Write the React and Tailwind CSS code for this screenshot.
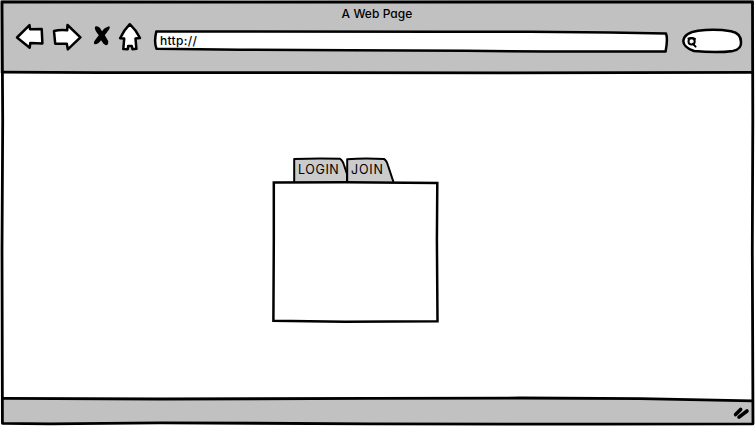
import React from "react";

const stroke = {
  fill: "none",
  stroke: "#000",
  strokeWidth: 2.5,
  strokeLinejoin: "round",
  strokeLinecap: "round",
};

function ArrowLeft() {
  return (
    <svg className="block h-[28px] w-[30px]" viewBox="15 23 30 28">
      <path {...stroke} fill="#fff" d="M17 37.5 L29.5 25.2 L30 29.2 L41.7 29 L42.4 43.4 L30.3 43 L29.7 47.7 Z" />
    </svg>
  );
}

function ArrowRight() {
  return (
    <svg className="block h-[28px] w-[30px]" viewBox="52 23 30 28">
      <path {...stroke} fill="#fff" d="M54 31 Q60 29.5 67.2 30.3 L67.5 25 L80.4 37.3 L67.8 49.3 L66.8 43.8 L55.2 43.7 Z" />
    </svg>
  );
}

function Stop() {
  return (
    <svg className="block h-[22px] w-[18px]" viewBox="93 25 18 22">
      <path d="M95.2 26.4 Q98 25.5 100 28 L102 31.2 Q104 27.8 109 26.2 Q110.6 27 109 29.4 L104.8 35.3 L108.2 41 Q108.7 45 106 45.3 Q103.5 44.5 101 40.2 Q98 44.7 94.5 44.3 Q93 42.5 95.2 40 L98.8 35.3 Q93.6 29 95.2 26.4 Z" fill="#000" />
    </svg>
  );
}

function Home() {
  return (
    <svg className="block h-[30px] w-[24px]" viewBox="118 22 24 30">
      <path {...stroke} fill="#fff" d="M129.8 24.2 Q124 30 120.1 38.2 L124.2 38.6 L123.3 49 L127.8 49.2 L128.2 46 L131.8 46 L132.5 49.2 L136.4 48.8 L135.5 38.6 L140 38 Q136 30 129.8 24.2 Z" />
    </svg>
  );
}

function AddressBar() {
  return (
    <div className="relative h-[24px] w-[516px] pl-[7px]">
      <svg className="absolute inset-0 h-full w-full" viewBox="153 29 516 24">
        <path {...stroke} fill="#fff" d="M156.3 31.5 L440 31.7 L530 31.8 L610 32.6 L666 33.5 Q668 39 665.6 51.4 L545 51.5 L465 50.8 L350 50.2 L240 49.7 L156.5 48.8 Q153.8 42 156.3 31.5 Z" />
      </svg>
      <span className="relative block text-[12px] font-medium leading-[23px] tracking-[0.32px]">http://</span>
    </div>
  );
}

function SearchBox() {
  return (
    <svg className="block h-[28px] w-[64px]" viewBox="680 27 64 28">
      <path {...stroke} fill="#fff" d="M698 30.7 Q715 28.7 731 31.2 Q741 33 741 42 Q741.8 49 733 50.9 Q718 53.2 694 51 Q683.5 47.5 683.3 41 Q684 32.8 698 30.7 Z" />
      <circle {...stroke} strokeWidth="2" cx="691.6" cy="41.4" r="3.1" />
      <path {...stroke} strokeWidth="2" d="M688.4 38.4 Q692 37.2 695 38.8 M692.8 43.8 L695.6 46.6" />
    </svg>
  );
}

function Tab({ label, wide }) {
  return (
    <button className={`relative block h-[26px] pl-[5px] text-left text-[12.5px] leading-[26px] ${wide ? "w-[53px] tracking-[0.6px]" : "w-[49px] tracking-[0.8px]"}`}>
      <svg className="absolute inset-0 h-full w-full overflow-visible" viewBox={wide ? "0 0 53 26" : "0 0 49 26"}>
        {wide ? (
          <path {...stroke} strokeWidth="2" fill="#cbcbcb" d="M1.2 25 L1.2 2 Q25 1 47 1.8 Q49.5 3 51 8 L54 17 L54 25" />
        ) : (
          <path {...stroke} strokeWidth="2" fill="#cbcbcb" d="M1.2 25 L1.2 2.2 Q18 1 38 2 Q40.4 3 42 8.5 L47.3 24.5" />
        )}
      </svg>
      <span className="relative">{label}</span>
    </button>
  );
}

export default function App() {
  return (
    <div className="relative flex h-[426px] w-[755px] flex-col overflow-hidden bg-white font-['Inter',sans-serif] text-black [font-feature-settings:'cv11'_1]">
      <header className="h-[73px] bg-[#c1c1c1]">
        <h1 className="flex h-[22px] justify-center pr-[1px] pt-[5px] text-[12px] font-medium leading-[18px] tracking-[0.05px]">
          <span>A Web Page</span>
        </h1>
        <div className="flex pl-[15px]">
          <div className="pt-[1px]"><ArrowLeft /></div>
          <div className="ml-[7px] pt-[1px]"><ArrowRight /></div>
          <div className="ml-[11px] pt-[3px]"><Stop /></div>
          <div className="ml-[7px]"><Home /></div>
          <div className="ml-[11px] pt-[7px]"><AddressBar /></div>
          <div className="ml-[11px] pt-[5px]"><SearchBox /></div>
        </div>
      </header>

      <main className="flex-1 pl-[272px] pt-[84px]">
        <div className="flex pl-[21px]">
          <Tab label="LOGIN" wide />
          <Tab label="JOIN" />
        </div>
        <section className="-mt-[3px] h-[144px] w-[168px]">
          <svg className="relative block h-full w-full" viewBox="272 180 168 144">
            <path {...stroke} fill="#fff" strokeLinejoin="miter" d="M273.8 182.5 L345 182.2 L437.3 183 L436.9 240 L437.5 321.2 L345 321.8 L273.4 320.8 L273.8 240 Z" />
          </svg>
        </section>
      </main>

      <footer className="flex h-[28px] justify-end">
        <svg className="block h-full w-full" viewBox="0 398 755 28">
          <path fill="#c1c1c1" d="M2 398 L500 398 L753 401 V423.5 H2 Z" />
          <g {...stroke} strokeWidth="3.6">
            <path d="M735.6 414.6 L740.6 409.4" />
            <path d="M739 417.2 L747 411" />
          </g>
        </svg>
      </footer>

      <svg className="pointer-events-none absolute inset-0 h-full w-full" viewBox="0 0 755 426">
        <path fill="#fff" d="M0 424 H755 V426 H0 Z M754 0 H755 V426 H754 Z" />
        <g {...stroke} strokeWidth="2.8">
          <path d="M2 2 L250 2.2 L500 2 L752.5 2 L752.8 120 L752.3 250 L753 423.8 L600 424.2 L370 423.8 L160 422.8 L50 423.9 L2.4 423.3 L2 250 L2.7 120 Z" />
          <path d="M2.5 72.2 L100 72.7 L300 72.6 L500 72.8 L752.5 72.4" />
          <path d="M2.5 398.4 L160 399 L370 398.4 L520 398 L640 398.6 L752.5 400.9" />
        </g>
      </svg>
    </div>
  );
}
